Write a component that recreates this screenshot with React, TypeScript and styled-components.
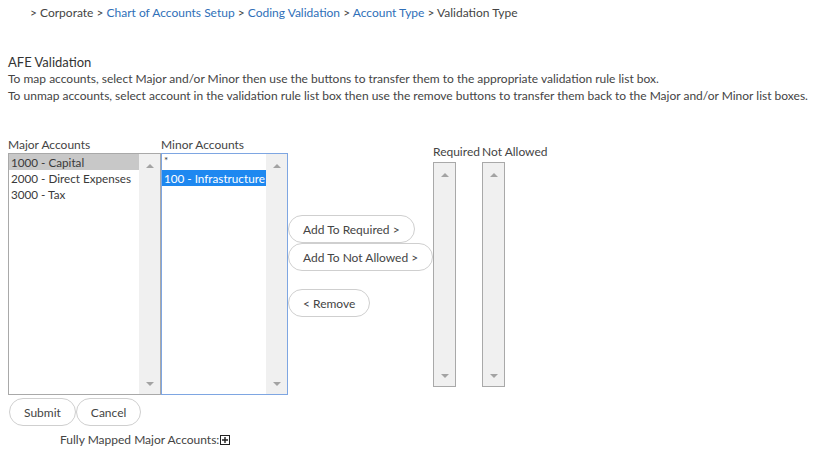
import React from 'react';
import styled, { createGlobalStyle } from 'styled-components';

const GlobalStyle = createGlobalStyle`
  body {
    margin: 0;
    background: #fff;
    font-family: Lato, "Open Sans", sans-serif;
    color: #444;
  }
`

const Page = styled.div`
  padding: 0 0 0 8px;
  font-size: 12px;
`

const Breadcrumb = styled.div`
  padding: 6px 0 0 22px;
  height: 20px;
  line-height: 14px;
  font-size: 12px;
  color: #444;
`

const Crumb = styled.a<{ link?: boolean }>`
  color: ${props => (props.link ? '#2f6fb8' : '#444')};
  text-decoration: none;
`

const Title = styled.div`
  margin-top: 28px;
  font-size: 13px;
  line-height: 16px;
  color: #333;
`

const Note = styled.div`
  font-size: 12px;
  line-height: 17px;
  color: #444;
`

const Mapper = styled.div`
  display: flex;
  align-items: flex-start;
  margin-top: 33px;
`

const Column = styled.div<{ top?: number }>`
  display: flex;
  flex-direction: column;
  padding-top: ${props => props.top ?? 0}px;
`

const Label = styled.div`
  font-size: 12px;
  line-height: 16px;
  color: #444;
  white-space: nowrap;
`

const ListBox = styled.div<{ width: number; height: number; focused?: boolean; gap?: number }>`
  display: flex;
  width: ${props => props.width}px;
  height: ${props => props.height}px;
  margin-top: ${props => props.gap ?? 0}px;
  border: 1px solid ${props => (props.focused ? '#7ea6e2' : '#a9a9a9')};
  background: #fff;
  box-sizing: border-box;
`

const Items = styled.div`
  flex: 1;
  display: flex;
  flex-direction: column;
  min-width: 0;
`

const Item = styled.div<{ selected?: 'grey' | 'blue' }>`
  height: 16px;
  line-height: 16px;
  padding-left: 2px;
  font-size: 11.7px;
  white-space: nowrap;
  color: ${props => (props.selected === 'blue' ? '#fff' : '#3a3a3a')};
  background: ${props =>
    props.selected === 'grey' ? '#c8c8c8' : props.selected === 'blue' ? '#1e88f0' : 'transparent'};
`

const Star = styled(Item)`
  line-height: 12px;
  font-size: 10px;
`

const Scrollbar = styled.div<{ width: number }>`
  width: ${props => props.width}px;
  flex: none;
  background: #f0f0f0;
  display: flex;
  flex-direction: column;
  justify-content: space-between;
  align-items: center;
  padding: 10px 0 8px;
  box-sizing: border-box;
`

const Arrow = styled.div<{ down?: boolean }>`
  width: 0;
  height: 0;
  border-left: 4.5px solid transparent;
  border-right: 4.5px solid transparent;
  ${props =>
    props.down ? 'border-top: 4px solid #a3a3a3;' : 'border-bottom: 4px solid #a3a3a3;'}
`

const ButtonStack = styled.div`
  display: flex;
  flex-direction: column;
  align-items: flex-start;
  padding-top: 78px;
  width: 145px;
  flex: none;
`

const Pill = styled.button<{ gap?: number }>`
  height: 28px;
  flex: none;
  margin-top: ${props => props.gap ?? 0}px;
  padding: 0 14px;
  border: 1px solid #cfcfcf;
  border-radius: 14px;
  background: #fff;
  font-family: Lato, "Open Sans", sans-serif;
  font-size: 12px;
  color: #444;
  white-space: nowrap;
  cursor: pointer;
`

const RuleColumn = styled(Column)`
  width: 49px;
  flex: none;
`

const Actions = styled.div`
  display: flex;
  margin: 3px 0 0 1px;
`

const Footer = styled.div`
  display: flex;
  align-items: center;
  padding: 6px 0 0 52px;
  font-size: 12px;
  color: #444;
`

const ScrollArrows: React.FC<{ width: number }> = ({ width }) => (
  <Scrollbar width={width}>
    <Arrow />
    <Arrow down />
  </Scrollbar>
)

const PlusBox = () => (
  <svg width="10" height="10" viewBox="0 0 10 10" style={{ marginLeft: 1 }}>
    <rect x="0.5" y="0.5" width="9" height="9" fill="#fff" stroke="#222" />
    <path d="M2 5h6M5 2v6" stroke="#222" strokeWidth="1.4" />
  </svg>
)

export default function App() {
  return (
    <Page>
      <GlobalStyle />
      <Breadcrumb>
        <Crumb>&gt; Corporate</Crumb> &gt; <Crumb link>Chart of Accounts Setup</Crumb> &gt;{' '}
        <Crumb link>Coding Validation</Crumb> &gt; <Crumb link>Account Type</Crumb> &gt;{' '}
        <Crumb>Validation Type</Crumb>
      </Breadcrumb>
      <Title>AFE Validation</Title>
      <Note>
        To map accounts, select Major and/or Minor then use the buttons to transfer them to the appropriate validation rule list box.
      </Note>
      <Note>
        To unmap accounts, select account in the validation rule list box then use the remove buttons to transfer them back to the Major and/or Minor list boxes.
      </Note>

      <Mapper>
        <Column>
          <Label>Major Accounts</Label>
          <ListBox width={153} height={242}>
            <Items>
              <Item selected="grey">1000 - Capital</Item>
              <Item>2000 - Direct Expenses</Item>
              <Item>3000 - Tax</Item>
            </Items>
            <ScrollArrows width={21} />
          </ListBox>
        </Column>
        <Column>
          <Label>Minor Accounts</Label>
          <ListBox width={127} height={242} focused>
            <Items>
              <Star>*</Star>
              <Item selected="blue">100 - Infrastructure</Item>
            </Items>
            <ScrollArrows width={21} />
          </ListBox>
        </Column>
        <ButtonStack>
          <Pill>Add To Required &gt;</Pill>
          <Pill>Add To Not Allowed &gt;</Pill>
          <Pill gap={18}>&lt; Remove</Pill>
        </ButtonStack>
        <RuleColumn top={7}>
          <Label>Required</Label>
          <ListBox width={23} height={225} gap={2}>
            <ScrollArrows width={21} />
          </ListBox>
        </RuleColumn>
        <RuleColumn top={7}>
          <Label>Not Allowed</Label>
          <ListBox width={23} height={225} gap={2}>
            <ScrollArrows width={21} />
          </ListBox>
        </RuleColumn>
      </Mapper>

      <Actions>
        <Pill>Submit</Pill>
        <Pill>Cancel</Pill>
      </Actions>
      <Footer>
        Fully Mapped Major Accounts:
        <PlusBox />
      </Footer>
    </Page>
  );
}
